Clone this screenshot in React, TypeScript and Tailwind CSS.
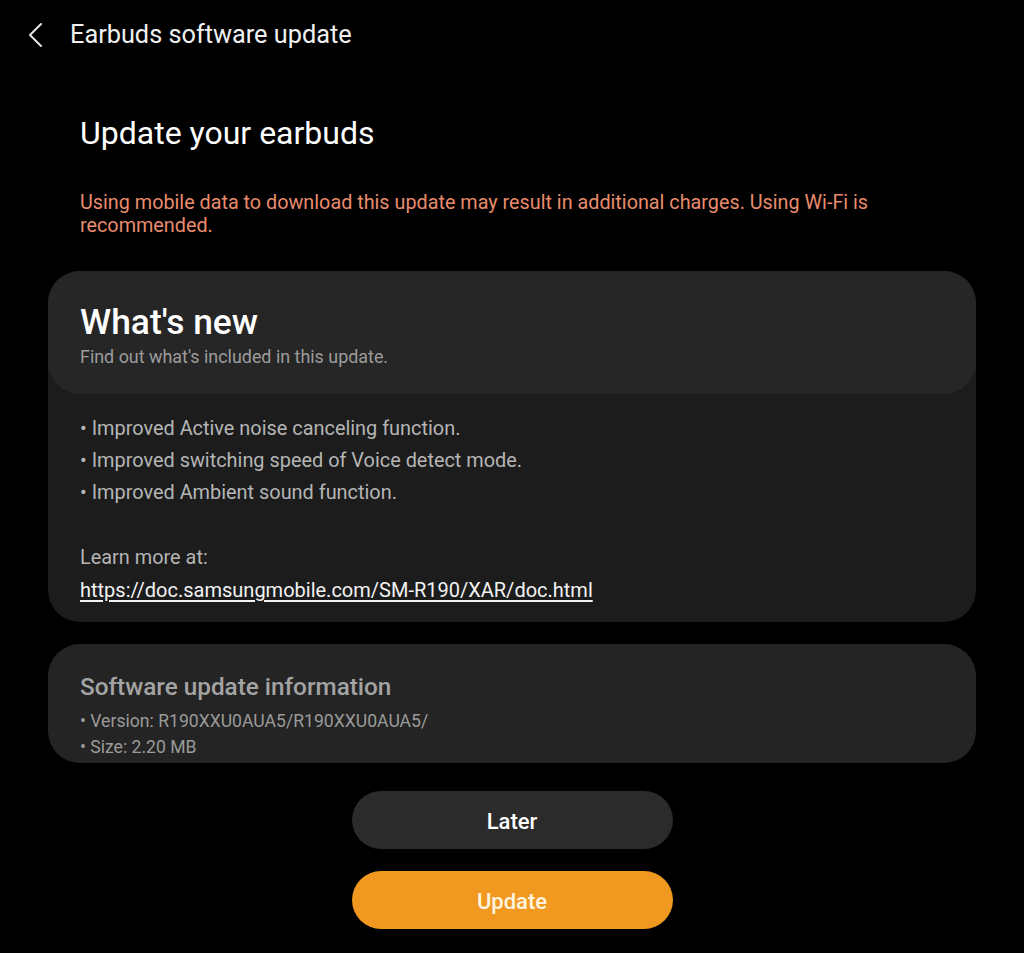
import React from 'react';

const bullets = [
    'Improved Active noise canceling function.',
    'Improved switching speed of Voice detect mode.',
    'Improved Ambient sound function.',
];

const App: React.FC = () => {
    return (
        <div className="min-h-[953px] w-[1024px] bg-black text-white" style={{ fontFamily: 'Roboto, "Noto Sans", sans-serif' }}>
            <header className="flex h-[70px] items-center pl-[28px]">
                <button className="flex h-[26px] w-[16px] items-center justify-center" aria-label="Back">
                    <svg width="16" height="26" viewBox="0 0 16 26" fill="none" stroke="#e6e6e6" strokeWidth={2} strokeLinecap="round" strokeLinejoin="round">
                        <path d="M13 2L2 13l11 11" />
                    </svg>
                </button>
                <h1 className="ml-[26px] text-[25.3px] leading-[32px] text-[#f0f0f0]">Earbuds software update</h1>
            </header>

            <main className="px-[48px]">
                <h2 className="mt-[43px] pl-[32px] text-[32px] leading-[40px] text-white">Update your earbuds</h2>
                <p className="mt-[38px] pl-[32px] pr-[60px] text-[19.8px] leading-[23px] text-[#e88c6d]">
                    Using mobile data to download this update may result in additional charges. Using Wi-Fi is recommended.
                </p>

                <section className="mt-[34px] rounded-[32px] bg-[#1c1c1c]">
                    <div className="h-[123px] rounded-[32px] bg-[#262626] pl-[32px] pt-[31px]">
                        <h3 className="text-[35.4px] font-medium leading-[40px] text-white">What's new</h3>
                        <p className="mt-[5px] text-[17.9px] leading-[20px] text-[#9c9c9c]">Find out what's included in this update.</p>
                    </div>
                    <div className="px-[32px] pb-[16px] pt-[19px] text-[19.9px] leading-[32px] text-[#b5b5b5]">
                        {bullets.map((b) => (
                            <p key={b}>• {b}</p>
                        ))}
                        <p className="mt-[33px]">Learn more at:</p>
                        <a className="block text-[20px] leading-[32px] text-[#f2f2f2] underline underline-offset-[3px]" href="#">
                            https://doc.samsungmobile.com/SM-R190/XAR/doc.html
                        </a>
                    </div>
                </section>

                <section className="mt-[22px] h-[119px] rounded-[32px] bg-[#242424] pl-[32px] pt-[28px]">
                    <h3 className="text-[24.3px] font-medium leading-[30px] text-[#a3a3a3]">Software update information</h3>
                    <div className="mt-[6px] text-[17.6px] leading-[26px] text-[#9a9a9a]">
                        <p>• Version: R190XXU0AUA5/R190XXU0AUA5/</p>
                        <p>• Size: 2.20 MB</p>
                    </div>
                </section>

                <div className="mt-[28px] flex flex-col items-center gap-[22px]">
                    <button className="h-[58px] w-[321px] rounded-full bg-[#2b2b2b] pt-[3px] text-[22px] font-medium text-white">Later</button>
                    <button className="h-[58px] w-[321px] rounded-full bg-[#f0981f] pt-[3px] text-[22px] font-medium text-[#fff4e0]">Update</button>
                </div>
            </main>
        </div>
    );
};

export default App;
